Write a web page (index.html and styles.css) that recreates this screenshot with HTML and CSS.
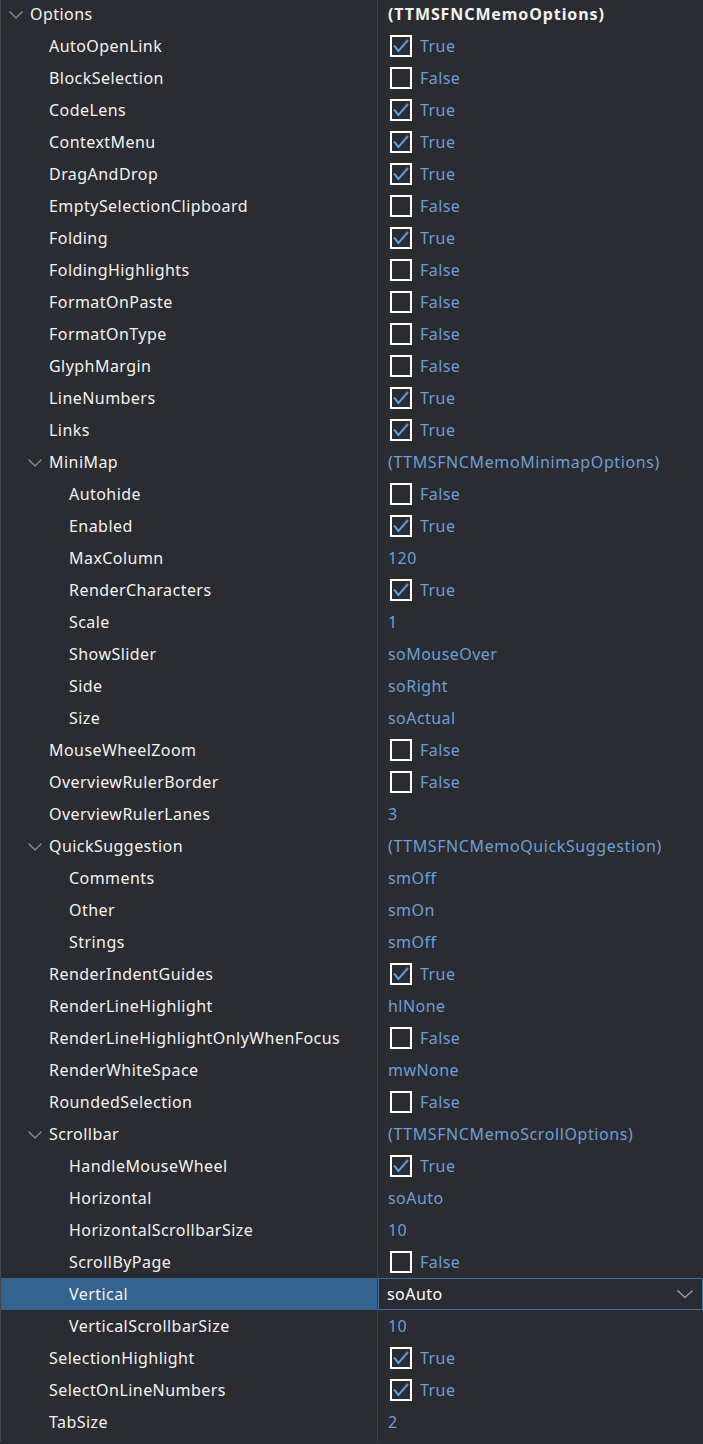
FILE: index.html
```html
<!DOCTYPE html>
<html lang="en">
<head>
  <meta charset="UTF-8">
  <title>Object Inspector - Options</title>
  <link rel="stylesheet" href="styles.css">
</head>
<body>
  <div class="inspector">
    <div class="prop-list">

      <div class="prop-row">
        <div class="prop-name lvl-0"><span class="toggle"><svg viewBox="0 0 16 16"><polyline points="1.5,4.5 8,11 14.5,4.5"/></svg></span>Options</div>
        <div class="prop-value"><span class="type-name bold">(TTMSFNCMemoOptions)</span></div>
      </div>

      <div class="prop-row">
        <div class="prop-name lvl-1">AutoOpenLink</div>
        <div class="prop-value"><span class="check on"><svg viewBox="0 0 18 18"><polyline points="2,8.5 6.5,14 16,3"/></svg></span>True</div>
      </div>
      <div class="prop-row">
        <div class="prop-name lvl-1">BlockSelection</div>
        <div class="prop-value"><span class="check"></span>False</div>
      </div>
      <div class="prop-row">
        <div class="prop-name lvl-1">CodeLens</div>
        <div class="prop-value"><span class="check on"><svg viewBox="0 0 18 18"><polyline points="2,8.5 6.5,14 16,3"/></svg></span>True</div>
      </div>
      <div class="prop-row">
        <div class="prop-name lvl-1">ContextMenu</div>
        <div class="prop-value"><span class="check on"><svg viewBox="0 0 18 18"><polyline points="2,8.5 6.5,14 16,3"/></svg></span>True</div>
      </div>
      <div class="prop-row">
        <div class="prop-name lvl-1">DragAndDrop</div>
        <div class="prop-value"><span class="check on"><svg viewBox="0 0 18 18"><polyline points="2,8.5 6.5,14 16,3"/></svg></span>True</div>
      </div>
      <div class="prop-row">
        <div class="prop-name lvl-1">EmptySelectionClipboard</div>
        <div class="prop-value"><span class="check"></span>False</div>
      </div>
      <div class="prop-row">
        <div class="prop-name lvl-1">Folding</div>
        <div class="prop-value"><span class="check on"><svg viewBox="0 0 18 18"><polyline points="2,8.5 6.5,14 16,3"/></svg></span>True</div>
      </div>
      <div class="prop-row">
        <div class="prop-name lvl-1">FoldingHighlights</div>
        <div class="prop-value"><span class="check"></span>False</div>
      </div>
      <div class="prop-row">
        <div class="prop-name lvl-1">FormatOnPaste</div>
        <div class="prop-value"><span class="check"></span>False</div>
      </div>
      <div class="prop-row">
        <div class="prop-name lvl-1">FormatOnType</div>
        <div class="prop-value"><span class="check"></span>False</div>
      </div>
      <div class="prop-row">
        <div class="prop-name lvl-1">GlyphMargin</div>
        <div class="prop-value"><span class="check"></span>False</div>
      </div>
      <div class="prop-row">
        <div class="prop-name lvl-1">LineNumbers</div>
        <div class="prop-value"><span class="check on"><svg viewBox="0 0 18 18"><polyline points="2,8.5 6.5,14 16,3"/></svg></span>True</div>
      </div>
      <div class="prop-row">
        <div class="prop-name lvl-1">Links</div>
        <div class="prop-value"><span class="check on"><svg viewBox="0 0 18 18"><polyline points="2,8.5 6.5,14 16,3"/></svg></span>True</div>
      </div>

      <div class="prop-row">
        <div class="prop-name lvl-1"><span class="toggle"><svg viewBox="0 0 16 16"><polyline points="1.5,4.5 8,11 14.5,4.5"/></svg></span>MiniMap</div>
        <div class="prop-value"><span class="type-name">(TTMSFNCMemoMinimapOptions)</span></div>
      </div>
      <div class="prop-row">
        <div class="prop-name lvl-2">Autohide</div>
        <div class="prop-value"><span class="check"></span>False</div>
      </div>
      <div class="prop-row">
        <div class="prop-name lvl-2">Enabled</div>
        <div class="prop-value"><span class="check on"><svg viewBox="0 0 18 18"><polyline points="2,8.5 6.5,14 16,3"/></svg></span>True</div>
      </div>
      <div class="prop-row">
        <div class="prop-name lvl-2">MaxColumn</div>
        <div class="prop-value">120</div>
      </div>
      <div class="prop-row">
        <div class="prop-name lvl-2">RenderCharacters</div>
        <div class="prop-value"><span class="check on"><svg viewBox="0 0 18 18"><polyline points="2,8.5 6.5,14 16,3"/></svg></span>True</div>
      </div>
      <div class="prop-row">
        <div class="prop-name lvl-2">Scale</div>
        <div class="prop-value">1</div>
      </div>
      <div class="prop-row">
        <div class="prop-name lvl-2">ShowSlider</div>
        <div class="prop-value">soMouseOver</div>
      </div>
      <div class="prop-row">
        <div class="prop-name lvl-2">Side</div>
        <div class="prop-value">soRight</div>
      </div>
      <div class="prop-row">
        <div class="prop-name lvl-2">Size</div>
        <div class="prop-value">soActual</div>
      </div>

      <div class="prop-row">
        <div class="prop-name lvl-1">MouseWheelZoom</div>
        <div class="prop-value"><span class="check"></span>False</div>
      </div>
      <div class="prop-row">
        <div class="prop-name lvl-1">OverviewRulerBorder</div>
        <div class="prop-value"><span class="check"></span>False</div>
      </div>
      <div class="prop-row">
        <div class="prop-name lvl-1">OverviewRulerLanes</div>
        <div class="prop-value">3</div>
      </div>

      <div class="prop-row">
        <div class="prop-name lvl-1"><span class="toggle"><svg viewBox="0 0 16 16"><polyline points="1.5,4.5 8,11 14.5,4.5"/></svg></span>QuickSuggestion</div>
        <div class="prop-value"><span class="type-name">(TTMSFNCMemoQuickSuggestion)</span></div>
      </div>
      <div class="prop-row">
        <div class="prop-name lvl-2">Comments</div>
        <div class="prop-value">smOff</div>
      </div>
      <div class="prop-row">
        <div class="prop-name lvl-2">Other</div>
        <div class="prop-value">smOn</div>
      </div>
      <div class="prop-row">
        <div class="prop-name lvl-2">Strings</div>
        <div class="prop-value">smOff</div>
      </div>

      <div class="prop-row">
        <div class="prop-name lvl-1">RenderIndentGuides</div>
        <div class="prop-value"><span class="check on"><svg viewBox="0 0 18 18"><polyline points="2,8.5 6.5,14 16,3"/></svg></span>True</div>
      </div>
      <div class="prop-row">
        <div class="prop-name lvl-1">RenderLineHighlight</div>
        <div class="prop-value">hlNone</div>
      </div>
      <div class="prop-row">
        <div class="prop-name lvl-1">RenderLineHighlightOnlyWhenFocus</div>
        <div class="prop-value"><span class="check"></span>False</div>
      </div>
      <div class="prop-row">
        <div class="prop-name lvl-1">RenderWhiteSpace</div>
        <div class="prop-value">mwNone</div>
      </div>
      <div class="prop-row">
        <div class="prop-name lvl-1">RoundedSelection</div>
        <div class="prop-value"><span class="check"></span>False</div>
      </div>

      <div class="prop-row">
        <div class="prop-name lvl-1"><span class="toggle"><svg viewBox="0 0 16 16"><polyline points="1.5,4.5 8,11 14.5,4.5"/></svg></span>Scrollbar</div>
        <div class="prop-value"><span class="type-name">(TTMSFNCMemoScrollOptions)</span></div>
      </div>
      <div class="prop-row">
        <div class="prop-name lvl-2">HandleMouseWheel</div>
        <div class="prop-value"><span class="check on"><svg viewBox="0 0 18 18"><polyline points="2,8.5 6.5,14 16,3"/></svg></span>True</div>
      </div>
      <div class="prop-row">
        <div class="prop-name lvl-2">Horizontal</div>
        <div class="prop-value">soAuto</div>
      </div>
      <div class="prop-row">
        <div class="prop-name lvl-2">HorizontalScrollbarSize</div>
        <div class="prop-value">10</div>
      </div>
      <div class="prop-row">
        <div class="prop-name lvl-2">ScrollByPage</div>
        <div class="prop-value"><span class="check"></span>False</div>
      </div>
      <div class="prop-row selected">
        <div class="prop-name lvl-2">Vertical</div>
        <div class="prop-value editor">
          <span class="editor-text">soAuto</span>
          <span class="editor-drop"><svg viewBox="0 0 18 18"><polyline points="1.5,5.5 9,12.5 16.5,5.5"/></svg></span>
        </div>
      </div>
      <div class="prop-row">
        <div class="prop-name lvl-2">VerticalScrollbarSize</div>
        <div class="prop-value">10</div>
      </div>

      <div class="prop-row">
        <div class="prop-name lvl-1">SelectionHighlight</div>
        <div class="prop-value"><span class="check on"><svg viewBox="0 0 18 18"><polyline points="2,8.5 6.5,14 16,3"/></svg></span>True</div>
      </div>
      <div class="prop-row">
        <div class="prop-name lvl-1">SelectOnLineNumbers</div>
        <div class="prop-value"><span class="check on"><svg viewBox="0 0 18 18"><polyline points="2,8.5 6.5,14 16,3"/></svg></span>True</div>
      </div>
      <div class="prop-row">
        <div class="prop-name lvl-1">TabSize</div>
        <div class="prop-value">2</div>
      </div>

    </div>
  </div>
</body>
</html>
```

FILE: styles.css
```css
/* Dark object inspector theme */
:root {
  --bg: #2b2c31;
  --edge: #45474d;
  --divider: #3d3f45;
  --name-text: #f2f2f2;
  --value-text: #6b9fd6;
  --check-border: #ffffff;
  --check-mark: #5b9ee0;
  --toggle: #8c8d91;
  --selected-bg: #34638f;
  --editor-border: #3a6f9f;
}

body {
  margin: 0;
  padding: 0;
  background-color: var(--bg);
  font-family: 'Noto Sans', 'Segoe UI', Arial, sans-serif;
  font-size: 16px;
  letter-spacing: 0.45px;
  color: var(--name-text);
  overflow: hidden;
}

.inspector {
  height: 1444px;
  border-left: 1px solid var(--edge);
  background:
    linear-gradient(var(--divider), var(--divider)) 376px 0 / 1px 100% no-repeat,
    var(--bg);
  box-sizing: border-box;
}

.prop-list {
  margin-top: -2px;
}

.prop-row {
  display: grid;
  grid-template-columns: 376px 1px 1fr;
  height: 32px;
}

.prop-name {
  grid-column: 1;
  display: flex;
  align-items: center;
  white-space: nowrap;
  position: relative;
}

.lvl-0 { padding-left: 29px; }
.lvl-1 { padding-left: 48px; }
.lvl-2 { padding-left: 68px; }

.toggle {
  position: absolute;
  top: 9px;
  width: 16px;
  height: 16px;
  margin-left: -22px;
}

.toggle svg {
  display: block;
  width: 16px;
  height: 16px;
  fill: none;
  stroke: var(--toggle);
  stroke-width: 1.3;
}

.prop-value {
  grid-column: 3;
  display: flex;
  align-items: center;
  padding-left: 10px;
  color: var(--value-text);
  white-space: nowrap;
}

.type-name {
  letter-spacing: 0.6px;
}

.type-name.bold {
  font-weight: bold;
  letter-spacing: 0.9px;
  color: var(--name-text);
}

.check {
  width: 22px;
  height: 22px;
  box-sizing: border-box;
  border: 2px solid var(--check-border);
  margin-left: 2px;
  margin-right: 8px;
  flex: none;
}

.check svg {
  display: block;
  width: 18px;
  height: 18px;
  fill: none;
  stroke: var(--check-mark);
  stroke-width: 2;
}

/* Selected row with inline editor */
.prop-row.selected .prop-name {
  background-color: var(--selected-bg);
}

.prop-value.editor {
  border: 1px solid var(--editor-border);
  color: #ffffff;
  padding-left: 8px;
  padding-right: 8px;
  justify-content: space-between;
}

.editor-drop svg {
  display: block;
  width: 18px;
  height: 18px;
  fill: none;
  stroke: #9a9ba0;
  stroke-width: 1.4;
}
```
